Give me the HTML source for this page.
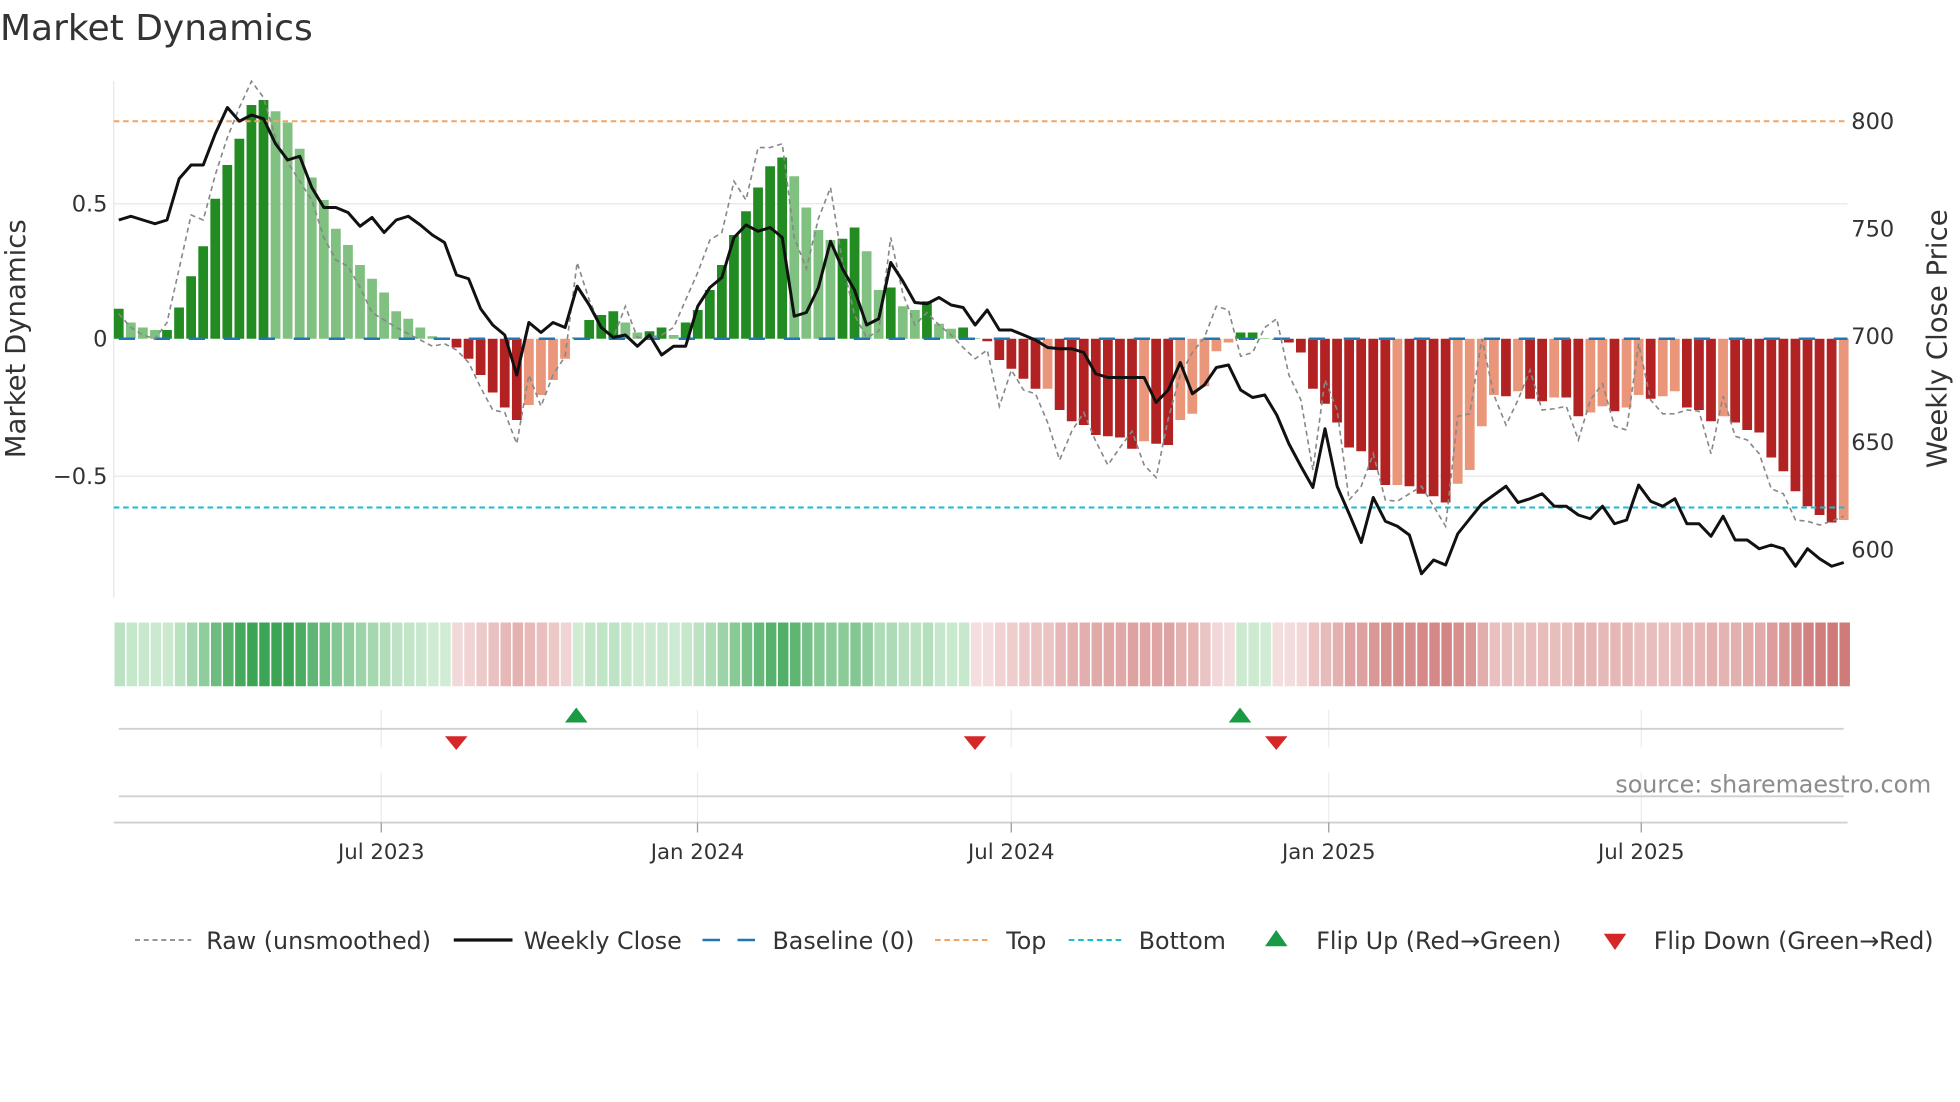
<!DOCTYPE html>
<html><head><meta charset="utf-8">
<style>
html,body{margin:0;padding:0;background:#fff;}
svg{display:block;}
text{font-family:"DejaVu Sans","Liberation Sans",sans-serif;fill:#333;}
</style></head>
<body>
<svg id="s" width="1960" height="1102" viewBox="0 0 1568 881.6" xmlns="http://www.w3.org/2000/svg">
<rect width="1568" height="882" fill="#fff"/>
<text x="0" y="32" font-size="28.8" fill="#333">Market Dynamics</text>
<line x1="91" y1="163" x2="1478" y2="163" stroke="#ebebeb" stroke-width="1.2"/>
<line x1="91" y1="381" x2="1478" y2="381" stroke="#ebebeb" stroke-width="1.2"/>
<line x1="91" y1="65" x2="91" y2="478" stroke="#e6e6e6" stroke-width="1"/>
<g id="bars"></g>
<line x1="95" y1="271" x2="1478" y2="271" stroke="#1f77b4" stroke-width="2" stroke-dasharray="13 15"/>
<line x1="91" y1="97" x2="1478" y2="97" stroke="#f4a460" stroke-width="1.6" stroke-dasharray="4.5 3"/>
<line x1="91" y1="406" x2="1478" y2="406" stroke="#17becf" stroke-width="1.6" stroke-dasharray="4.5 3"/>
<polyline id="raw" fill="none" stroke="#888" stroke-width="1.3" stroke-dasharray="4 3"/>
<polyline id="close" fill="none" stroke="#111" stroke-width="2.4" stroke-linejoin="round"/>
<text x="86" y="169" font-size="18" text-anchor="end">0.5</text>
<text x="86" y="277" font-size="18" text-anchor="end">0</text>
<text x="86" y="387" font-size="18" text-anchor="end">−0.5</text>
<text transform="translate(20,271) rotate(-90)" font-size="22" text-anchor="middle">Market Dynamics</text>
<text x="1481" y="103" font-size="18">800</text>
<text x="1481" y="189" font-size="18">750</text>
<text x="1481" y="275" font-size="18">700</text>
<text x="1481" y="360" font-size="18">650</text>
<text x="1481" y="446" font-size="18">600</text>
<text transform="translate(1557,271) rotate(-90)" font-size="22" text-anchor="middle">Weekly Close Price</text>
<g id="strip"></g>
<g stroke="#ececec" stroke-width="1">
<line x1="305" y1="568" x2="305" y2="598"/><line x1="558" y1="568" x2="558" y2="598"/><line x1="809" y1="568" x2="809" y2="598"/><line x1="1063" y1="568" x2="1063" y2="598"/><line x1="1313" y1="568" x2="1313" y2="598"/>
<line x1="305" y1="618" x2="305" y2="658"/><line x1="558" y1="618" x2="558" y2="658"/><line x1="809" y1="618" x2="809" y2="658"/><line x1="1063" y1="618" x2="1063" y2="658"/><line x1="1313" y1="618" x2="1313" y2="658"/>
</g>
<line x1="95" y1="583" x2="1475" y2="583" stroke="#d0d0d0" stroke-width="1.5"/>
<line x1="95" y1="637" x2="1475" y2="637" stroke="#d0d0d0" stroke-width="1.5"/>
<line x1="91" y1="658" x2="1478" y2="658" stroke="#d0d0d0" stroke-width="1.5"/>
<g stroke="#999" stroke-width="1"><line x1="305" y1="658" x2="305" y2="666"/><line x1="558" y1="658" x2="558" y2="666"/><line x1="809" y1="658" x2="809" y2="666"/><line x1="1063" y1="658" x2="1063" y2="666"/><line x1="1313" y1="658" x2="1313" y2="666"/></g>
<g font-size="17" text-anchor="middle">
<text x="305" y="687">Jul 2023</text><text x="558" y="687">Jan 2024</text><text x="809" y="687">Jul 2024</text><text x="1063" y="687">Jan 2025</text><text x="1313" y="687">Jul 2025</text>
</g>
<text x="1545" y="634" font-size="19" text-anchor="end" style="fill:#8c8c8c">source: sharemaestro.com</text>
<g fill="#1a9a45"><polygon points="452,578 470,578 461,566"/><polygon points="983,578 1001,578 992,566"/></g>
<g fill="#d62728"><polygon points="356,589 374,589 365,600"/><polygon points="771,589 789,589 780,600"/><polygon points="1012,589 1030,589 1021,600"/></g>
<g font-size="19">
<line x1="108" y1="752" x2="153" y2="752" stroke="#888" stroke-width="1.4" stroke-dasharray="4 3"/>
<text x="165" y="759">Raw (unsmoothed)</text>
<line x1="363" y1="752" x2="410" y2="752" stroke="#111" stroke-width="2.6"/>
<text x="419" y="759">Weekly Close</text>
<line x1="562" y1="752" x2="606" y2="752" stroke="#1f77b4" stroke-width="2" stroke-dasharray="14 14"/>
<text x="618" y="759">Baseline (0)</text>
<line x1="748" y1="752" x2="793" y2="752" stroke="#f4a460" stroke-width="1.6" stroke-dasharray="4.5 3"/>
<text x="805" y="759">Top</text>
<line x1="855" y1="752" x2="899" y2="752" stroke="#17becf" stroke-width="1.6" stroke-dasharray="4.5 3"/>
<text x="911" y="759">Bottom</text>
<polygon points="1012,757 1030,757 1021,744" fill="#1a9a45"/>
<text x="1053" y="759">Flip Up (Red→Green)</text>
<polygon points="1283,747 1301,747 1292,760" fill="#d62728"/>
<text x="1323" y="759">Flip Down (Green→Red)</text>
</g>
</svg>
<script>
var H=[24,13,9,7,7,25,50,74,112,139,160,187,191,182,173,152,129,111,88,75,59,48,37,22,16,9,2,0.5,-7,-16,-29,-43,-55,-65,-53,-45,-33,-16,1,15,19,22,13,5,6,9,3,13,23,39,59,83,102,121,138,145,130,105,87,79,80,89,70,39,41,26,23,30,12,8,9,0.5,-2,-17,-24,-32,-40,-40,-57,-66,-69,-77,-78,-79,-88,-82,-84,-85,-65,-60,-38,-10,-3,5,5,0.5,-1,-3,
-11,-40,-52,-67,-87,-90,-105,-117,-117,-118,-124,-126,-131,-116,-105,-70,-45,-46,-42,-48,-50,-47,-47,-62,-59,-54,-58,-55,-45,-48,-46,-42,-55,-57,-66,-62,-67,-73,-75,-95,-106,-122,-134,-141,-147,-145];
var runs=[["D",1],["L",3],["D",9],["L",15],["D",6],["L",4],["D",4],["L",2],["D",2],["L",1],["D",9],["L",4],["D",2],["L",2],["D",1],["L",2],["D",1],["L",2],["D",1],["L",1],["D",5],["L",1],["D",7],["L",1],["D",2],["L",5],["D",2],["L",2],["D",1],
["D",8],["L",1],["D",4],["L",4],["D",1],["L",1],["D",2],["L",1],["D",2],["L",2],["D",1],["L",2],["D",1],["L",2],["D",3],["L",1],["D",9],["L",1]];
var D=[];runs.forEach(function(r){for(var i=0;i<r[1];i++)D.push(r[0]);});
var C=[176,173,176,179,176,143,132,132,107,86,97,92,95,115,128,125,150,166,166,170,181,174,186,176,173,180,188,194,220,223,247,260,268,300,258,266,258,262,229,244,262,270,268,277,268,284,277,277,245,230,222,190,180,185,182,190,253,250,230,193,215,232,260,255,210,225,242,243,238,244,246,260,248,264,264,268,272,278,279,279,282,299,302,302,302,302,322,312,290,315,308,294,292,312,318,316,332,355,373,390,343,389,411,434,398,417,421,428,459,448,452,427,415,403,396,389,402,399,395,405,405,412,415,405,419,416,388,401,405,399,419,419,429,413,432,432,439,436,439,453,439,447,453,450];
var R=[251,262,268,271,258,215,172,176,140,110,86,65,78,110,130,145,160,190,208,213,230,250,256,262,267,272,277,275,280,290,310,328,330,355,300,325,300,285,210,240,262,270,245,270,270,268,262,240,218,192,186,145,160,118,118,115,190,215,175,150,210,252,270,265,190,235,260,250,260,268,278,287,280,325,296,312,315,338,368,345,330,353,372,358,345,372,382,335,300,282,270,245,248,285,282,262,255,300,320,376,304,328,400,389,363,400,401,395,389,405,421,333,331,271,316,340,320,296,328,327,325,352,320,307,341,344,275,320,331,331,328,329,363,317,349,352,363,391,395,416,417,420,417,413];
var ns="http://www.w3.org/2000/svg",b=document.getElementById("bars"),st=document.getElementById("strip");
function mix(a,c,t){return "rgb("+[0,1,2].map(function(i){return Math.round(a[i]+(c[i]-a[i])*t)}).join(",")+")";}
var cp=[],rp=[];
for(var k=0;k<144;k++){
 var x=95+9.65*k,h=H[k],d=D[k]||"D";
 var r=document.createElementNS(ns,"rect");
 r.setAttribute("x",(x-3.9).toFixed(2));r.setAttribute("width","7.8");
 if(h>=0){r.setAttribute("y",(271-h).toFixed(2));r.setAttribute("height",Math.max(h,0.5));r.setAttribute("fill",d=="D"?"#228b22":"#80c080");}
 else{r.setAttribute("y","271");r.setAttribute("height",-h);r.setAttribute("fill",d=="D"?"#b22222":"#e9967a");}
 b.appendChild(r);
 var s=document.createElementNS(ns,"rect");
 s.setAttribute("x",(91+9.65*k+0.6).toFixed(2));s.setAttribute("width","8.4");s.setAttribute("y","498");s.setAttribute("height","51");
 var g=(k>=38&&k<=70)||k<=27||(k>=93&&k<=95);
 if(g){var t=Math.min(1,Math.abs(h)/170);s.setAttribute("fill",mix([208,236,212],[60,165,85],t));}
 else{var t=Math.min(1,Math.abs(h)/150);s.setAttribute("fill",mix([244,222,222],[206,120,118],t));}
 st.appendChild(s);
 cp.push(x.toFixed(1)+","+C[k]);rp.push(x.toFixed(1)+","+R[k]);
}
document.getElementById("close").setAttribute("points",cp.join(" "));
document.getElementById("raw").setAttribute("points",rp.join(" "));
</script>
</body></html>
